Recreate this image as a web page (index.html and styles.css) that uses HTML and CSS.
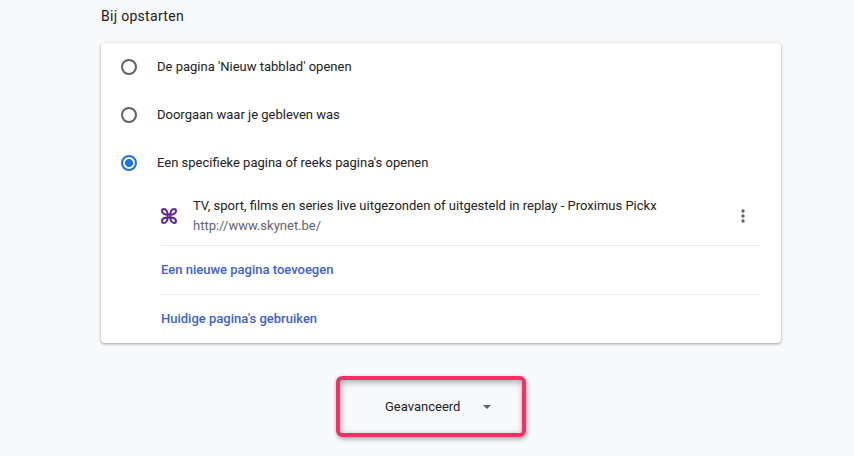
FILE: index.html
```html
<!DOCTYPE html>
<html lang="nl">
<head>
  <meta charset="UTF-8">
  <title>Instellingen</title>
  <link rel="stylesheet" href="styles.css">
</head>
<body>

<main class="settings">
  <h2>Bij opstarten</h2>

  <div class="card">
    <div class="option"><span class="radio"></span>De pagina 'Nieuw tabblad' openen</div>
    <div class="option"><span class="radio"></span>Doorgaan waar je gebleven was</div>
    <div class="option"><span class="radio checked"></span>Een specifieke pagina of reeks pagina's openen</div>

    <div class="pages">
      <div class="page">
        <svg class="favicon" viewBox="0 0 16 16">
          <path d="M7 6.6C4 6.8 1 5.4 1 2.9C1 1.8 1.8 1 2.9 1C5.4 1 6.8 4 6.6 7V9C6.8 12 5.4 15 2.9 15C1.8 15 1 14.2 1 13.1C1 10.6 4 9.2 7 9.4H9C12 9.2 15 10.6 15 13.1C15 14.2 14.2 15 13.1 15C10.6 15 9.2 12 9.4 9V7C9.2 4 10.6 1 13.1 1C14.2 1 15 1.8 15 2.9C15 5.4 12 6.8 9 6.6Z"/>
        </svg>
        <div class="page-text">
          <div class="page-title">TV, sport, films en series live uitgezonden of uitgesteld in replay - Proximus Pickx</div>
          <div class="page-url">http://www.skynet.be/</div>
        </div>
        <svg class="more" viewBox="0 0 24 24">
          <circle cx="12" cy="6" r="2"/>
          <circle cx="12" cy="12" r="2"/>
          <circle cx="12" cy="18" r="2"/>
        </svg>
      </div>
      <a class="link">Een nieuwe pagina toevoegen</a>
      <a class="link">Huidige pagina's gebruiken</a>
    </div>
  </div>

  <div class="advanced">
    <span>Geavanceerd</span>
    <span class="arrow"></span>
  </div>
</main>

</body>
</html>
```
FILE: styles.css
```css
body {
  margin: 0;
  background: #f8f9fa;
  font-family: Roboto, sans-serif;
  font-size: 13px;
  line-height: 20px;
  color: #202124;
}
.settings {
  width: 680px;
  margin-left: 101px;
  padding-bottom: 16px;
}
h2 {
  margin: 0;
  padding: 6px 0 17px;
  font-size: 14px;
  font-weight: 400;
  letter-spacing: 0.3px;
}
.card {
  height: 300px;
  background: #fff;
  border-radius: 4px;
  box-shadow: 0 1px 2px rgba(60,64,67,0.3), 0 1px 3px 1px rgba(60,64,67,0.15);
}
.option {
  display: flex;
  align-items: center;
  height: 48px;
  padding-left: 20px;
}
.radio {
  box-sizing: border-box;
  width: 16px;
  height: 16px;
  margin-right: 20px;
  border: 2px solid #5f6368;
  border-radius: 50%;
}
.checked {
  border-color: #1a73e8;
  background: radial-gradient(#1a73e8 3.7px, #fff 4.3px);
}
.pages {
  margin: 0 21px 0 60px;
}
.page {
  display: flex;
  align-items: center;
  height: 58px;
}
.favicon {
  width: 16px;
  height: 16px;
  margin-right: 16px;
  fill: none;
  stroke: #5c2490;
  stroke-width: 2;
}
.page-text {
  flex: 1;
}
.page-url {
  color: #5f6368;
}
.more {
  width: 20px;
  height: 20px;
  margin-right: 7px;
  fill: #5f6368;
}
.link {
  display: block;
  height: 48px;
  line-height: 48px;
  border-top: 1px solid #ebebeb;
  color: #3c62d0;
  font-weight: 500;
}
.advanced {
  box-sizing: border-box;
  display: flex;
  align-items: center;
  width: 190px;
  height: 61px;
  margin: 33px 0 0 235px;
  padding-left: 45px;
  border: 4px solid #fd2c69;
  border-radius: 6px;
  box-shadow: 1px 2px 5px rgba(0,0,0,0.35), inset 1px 2px 6px rgba(0,0,0,0.35);
}
.arrow {
  margin-left: 23px;
  border: 4px solid transparent;
  border-top-color: #5f6368;
  border-bottom: 0;
}
```
